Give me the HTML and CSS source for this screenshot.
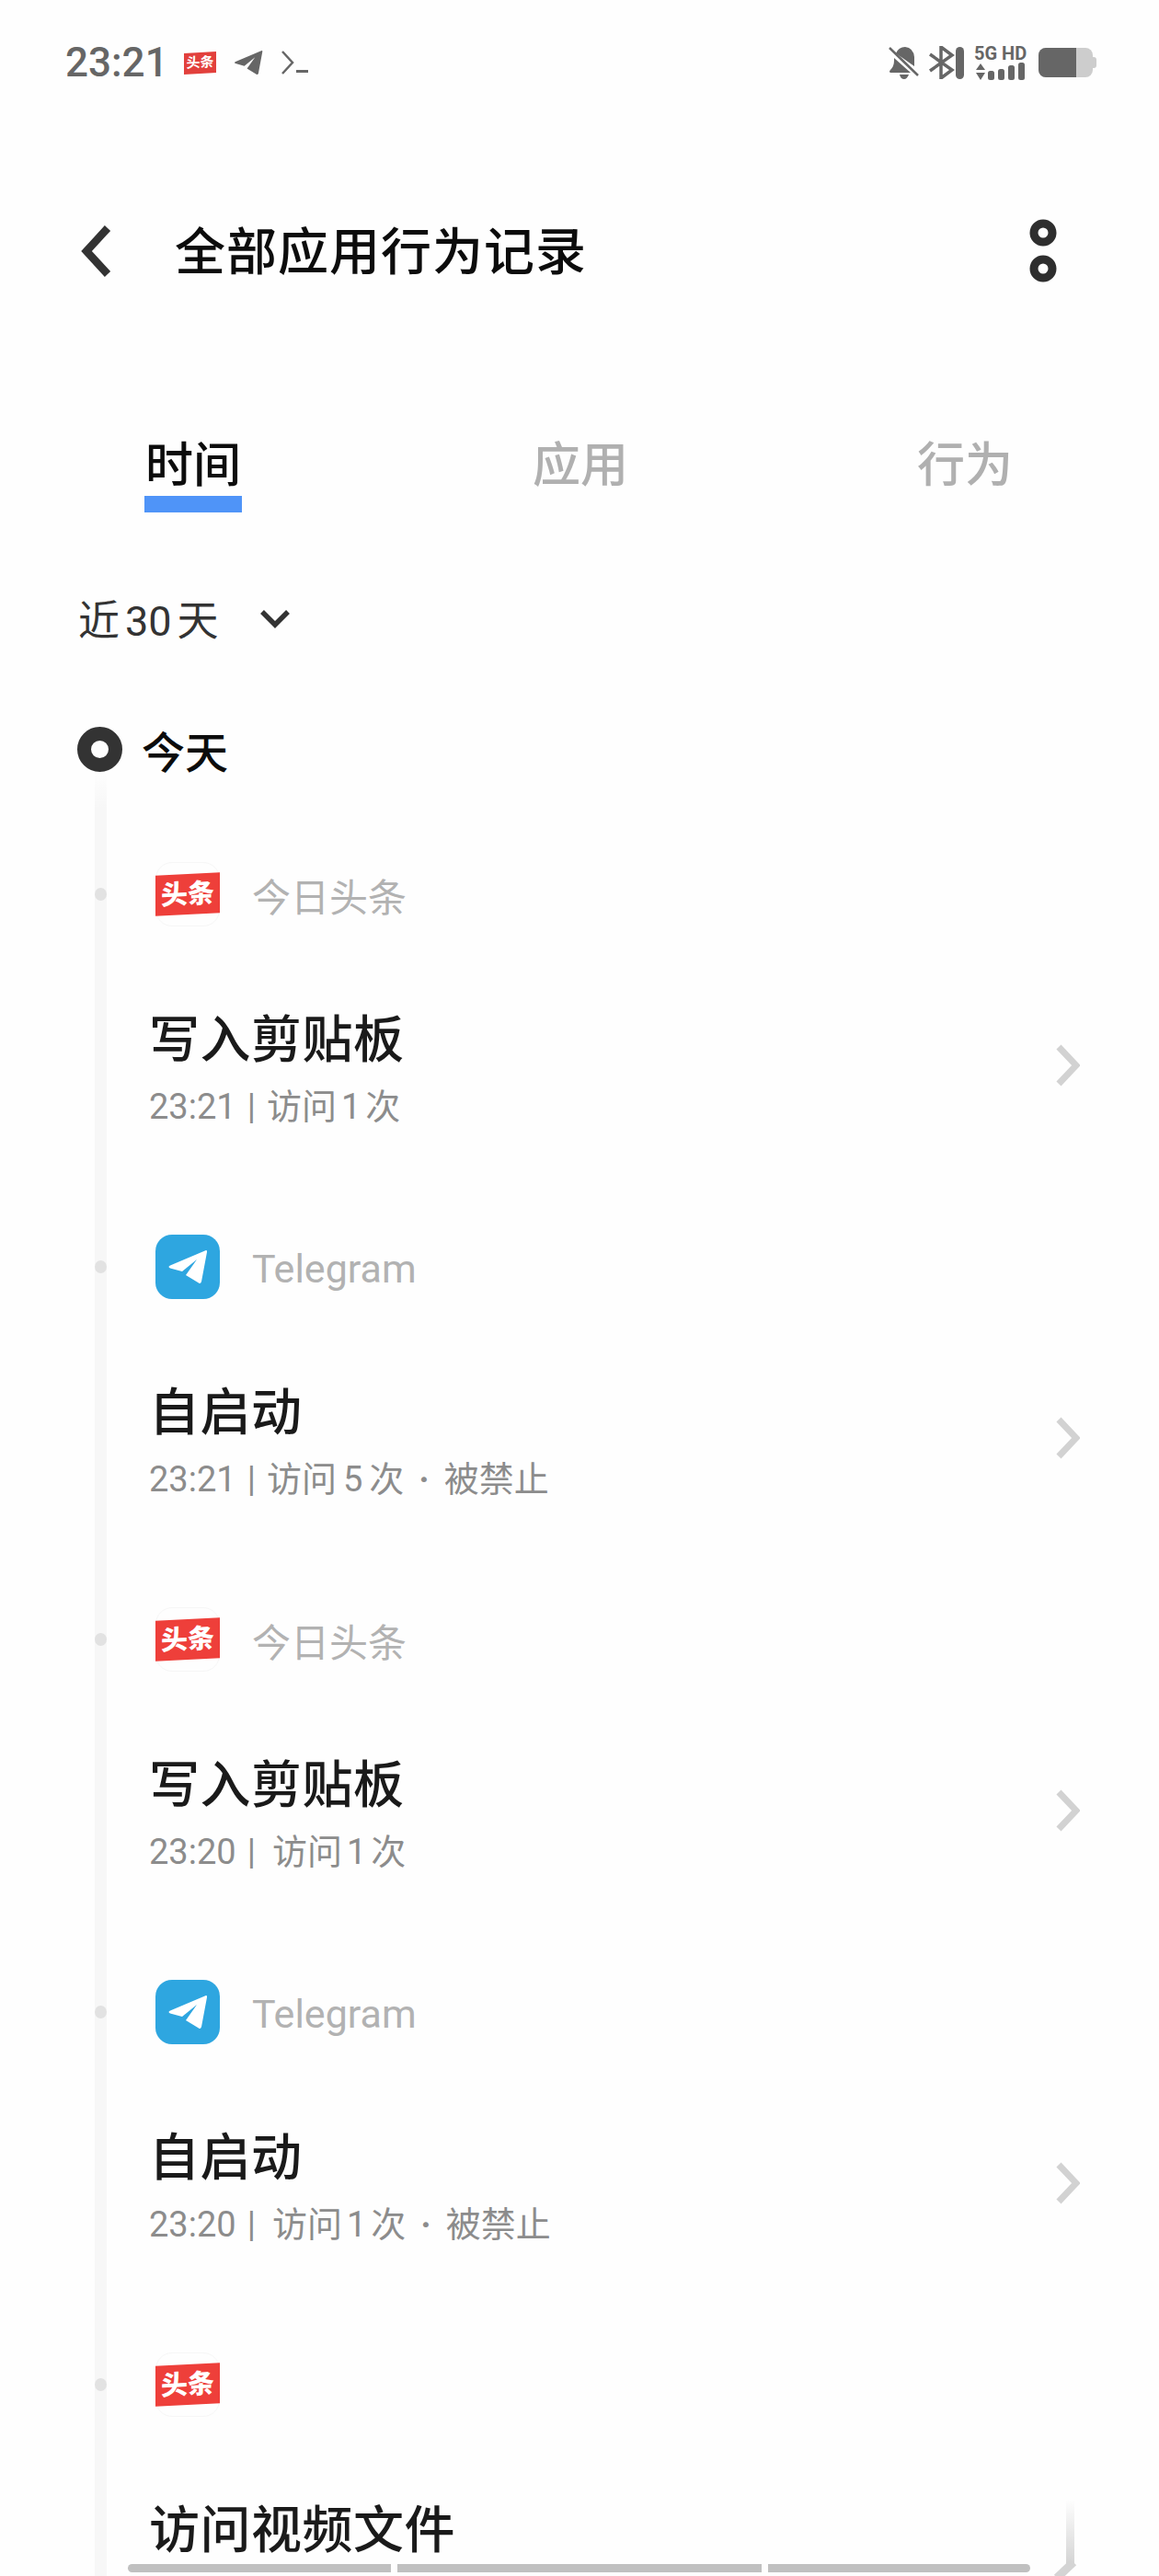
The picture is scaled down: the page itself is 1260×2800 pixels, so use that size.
FILE: index.html
```html
<!DOCTYPE html>
<html lang="zh-CN">
<head>
    <meta charset="UTF-8">
    <meta name="viewport" content="width=device-width, initial-scale=1.0">
    <title>全部应用行为记录</title>
    <link rel="stylesheet" href="styles.css">
</head>
<body>
    <svg class="defs" width="0" height="0">
        <symbol id="plane" viewBox="11 17 44 38">
            <path d="M53 18 Q54.500 18 54 20 L48 52 Q47 55 45 53.500 L31 45 L43 28 L27 41 L14 37.500 Q11 36 14 34.500 Z"/>
        </symbol>
        <symbol id="chevron" viewBox="0 0 26 46">
            <path d="M3 3 L22 23 L3 43" fill="none" stroke="currentColor" stroke-width="7"/>
        </symbol>
    </svg>

    <div class="statusbar">
        <span class="clock">23:21</span>
        <span class="badge">头条</span>
        <svg class="status-plane" width="32" height="28"><use href="#plane"/></svg>
        <svg class="status-term" width="30" height="26" viewBox="0 0 30 26">
            <path d="M1 1 L12 13 L1 25" fill="none" stroke="#666" stroke-width="2.500"/>
            <rect x="16" y="21" width="13" height="3" fill="#666"/>
        </svg>
        <div class="status-right">
            <svg width="34" height="36" viewBox="0 0 34 36">
                <path d="M8 8 Q11 1 18 1 Q27 2 28 12 L28 22 L8 8 Z M6 13 L24 29 L2 29 Q0 28 2 26 Q6 22 6 16 Z M12 31 L22 31 Q20 36 17 36 Q13 36 12 31 Z" fill="#666"/>
                <path d="M1 2 L32 32" stroke="#666" stroke-width="2.500"/>
            </svg>
            <svg class="bt" width="38" height="36" viewBox="0 0 38 36">
                <path d="M1 9 L25 26 L13 35 L13 1 L25 10 L1 27" fill="none" stroke="#666" stroke-width="3.500"/>
                <rect x="29" y="1" width="9" height="35" rx="4.500" fill="#666"/>
            </svg>
            <div class="net">
                <span class="net-label">5G HD</span>
                <svg width="58" height="20" viewBox="0 0 58 20">
                    <path d="M2 8 L7 1 L12 8 Z M2 11 L12 11 L7 19 Z" fill="#666"/>
                    <rect x="15" y="9" width="7" height="10" rx="2.500" fill="#666"/>
                    <rect x="26" y="7" width="7" height="12" rx="2.500" fill="#666"/>
                    <rect x="37" y="3" width="7" height="16" rx="2.500" fill="#666"/>
                    <rect x="48" y="0" width="7" height="19" rx="2.500" fill="#666"/>
                </svg>
            </div>
            <div class="battery"><div class="battery-fill"></div></div>
            <div class="battery-cap"></div>
        </div>
    </div>

    <header class="topbar">
        <svg class="back" width="34" height="56" viewBox="0 0 34 56">
            <path d="M30 3 L7 28 L30 53" fill="none" stroke="#333" stroke-width="8.500"/>
        </svg>
        <h1>全部应用行为记录</h1>
        <svg class="more" width="30" height="70" viewBox="0 0 30 70">
            <circle cx="15" cy="15" r="10" fill="none" stroke="#2e2e2e" stroke-width="9"/>
            <circle cx="15" cy="54" r="10" fill="none" stroke="#2e2e2e" stroke-width="9"/>
        </svg>
    </header>

    <nav class="tabs">
        <div class="tab active">时间</div>
        <div class="tab">应用</div>
        <div class="tab">行为</div>
    </nav>

    <div class="filter">
        <span>近<span class="num">30</span>天</span>
        <svg width="34" height="22" viewBox="0 0 34 22">
            <path d="M3 3 L17 17 L31 3" fill="none" stroke="#333" stroke-width="5.500"/>
        </svg>
    </div>

    <div class="today">
        <span class="ring"></span>
        <span>今天</span>
    </div>

    <main class="timeline">
        <section class="item">
            <div class="item-head">
                <span class="dot"></span>
                <div class="logo"><span class="logo-band">头条</span></div>
                <span class="app-name">今日头条</span>
            </div>
            <div class="item-body">
                <div>
                    <div class="item-title">写入剪贴板</div>
                    <div class="item-sub">23:21<span class="bar-sep">|</span>访问<span class="num one">1</span>次</div>
                </div>
                <svg class="arrow" width="26" height="46"><use href="#chevron"/></svg>
            </div>
        </section>

        <section class="item">
            <div class="item-head">
                <span class="dot"></span>
                <div class="logo logo-tg"><svg width="44" height="38"><use href="#plane"/></svg></div>
                <span class="app-name">Telegram</span>
            </div>
            <div class="item-body">
                <div>
                    <div class="item-title">自启动</div>
                    <div class="item-sub">23:21<span class="bar-sep">|</span>访问<span class="num">5</span>次<span class="sep">·</span>被禁止</div>
                </div>
                <svg class="arrow" width="26" height="46"><use href="#chevron"/></svg>
            </div>
        </section>

        <section class="item">
            <div class="item-head">
                <span class="dot"></span>
                <div class="logo"><span class="logo-band">头条</span></div>
                <span class="app-name">今日头条</span>
            </div>
            <div class="item-body">
                <div>
                    <div class="item-title">写入剪贴板</div>
                    <div class="item-sub">23:20<span class="bar-sep wide">|</span>访问<span class="num one">1</span>次</div>
                </div>
                <svg class="arrow" width="26" height="46"><use href="#chevron"/></svg>
            </div>
        </section>

        <section class="item">
            <div class="item-head">
                <span class="dot"></span>
                <div class="logo logo-tg"><svg width="44" height="38"><use href="#plane"/></svg></div>
                <span class="app-name">Telegram</span>
            </div>
            <div class="item-body">
                <div>
                    <div class="item-title">自启动</div>
                    <div class="item-sub">23:20<span class="bar-sep wide">|</span>访问<span class="num one">1</span>次<span class="sep">·</span>被禁止</div>
                </div>
                <svg class="arrow" width="26" height="46"><use href="#chevron"/></svg>
            </div>
        </section>

        <section class="item">
            <div class="item-head">
                <span class="dot"></span>
                <div class="logo"><span class="logo-band">头条</span></div>
            </div>
            <div class="item-body">
                <div class="item-title">访问视频文件</div>
            </div>
        </section>
    </main>

    <!-- scrollbar strip over the bottom edge -->
    <div class="bottom-bars">
        <div class="bar bar-a"></div>
        <div class="bar bar-b"></div>
        <div class="bar bar-c"></div>
    </div>
    <svg class="glitch" width="30" height="90" viewBox="0 0 30 90">
        <defs>
            <linearGradient id="fade" x1="0" y1="0" x2="0" y2="1">
                <stop offset="0" stop-color="#d4d4d4" stop-opacity="0"/>
                <stop offset="1" stop-color="#d4d4d4"/>
            </linearGradient>
        </defs>
        <rect x="17" y="0" width="9" height="70" fill="url(#fade)"/>
        <path d="M25 68 L7 85" stroke="#d4d4d4" stroke-width="9" fill="none"/>
    </svg>
</body>
</html>
```
FILE: styles.css
```css
/* General Styles */
body {
    position: relative;
    width: 1260px;
    height: 2800px;
    margin: 0;
    overflow: hidden;
    background-color: #fefefe;
    font-family: Roboto, "Noto Sans CJK SC", sans-serif;
}

.defs {
    display: block;
    height: 0;
}

.num {
    margin: 0 7px;
}

.num.one {
    margin: 0 5px;
}

/* Status Bar */
.statusbar {
    display: flex;
    align-items: center;
    height: 76px;
    padding: 30px 68px 0 71px;
    color: #666;
}

.clock {
    font-size: 44px;
    font-weight: 500;
}

.badge {
    margin-left: 17px;
    width: 35px;
    height: 23px;
    background-color: #e2403c;
    color: #fff;
    font-size: 15px;
    font-weight: 700;
    line-height: 23px;
    text-align: center;
    transform: skewY(-3deg);
}

.status-plane {
    margin-left: 19px;
    fill: #666;
}

.status-term {
    margin-left: 20px;
}

.status-right {
    display: flex;
    align-items: center;
    margin-left: auto;
}

.bt {
    margin-left: 10px;
}

.net {
    display: flex;
    flex-direction: column;
    margin-left: 11px;
}

.net-label {
    font-size: 20px;
    font-weight: 700;
    line-height: 20px;
    white-space: nowrap;
}

.battery {
    width: 59px;
    height: 32px;
    margin-left: 12px;
    background-color: #cdcdcd;
    border-radius: 8px;
    overflow: hidden;
}

.battery-fill {
    width: 41px;
    height: 100%;
    background-color: #666;
}

.battery-cap {
    width: 4px;
    height: 12px;
    background-color: #cdcdcd;
    border-radius: 0 3px 3px 0;
}

/* Header */
.topbar {
    display: flex;
    align-items: center;
    height: 80px;
    margin-top: 127px;
    padding-left: 87px;
}

.topbar h1 {
    margin: -8px 0 0 69px;
    color: #0c0c0c;
    font-size: 55px;
    font-weight: 500;
    letter-spacing: 1px;
}

.more {
    margin-left: auto;
    margin-right: 111px;
}

/* Tabs */
.tabs {
    display: flex;
    gap: 312px;
    margin-top: 158px;
    padding-left: 157px;
}

.tab {
    width: 98px;
    padding: 4px 4px 0;
    border-bottom: 18px solid transparent;
    color: #b0b0b0;
    font-size: 52px;
    font-weight: 500;
    line-height: 64px;
    text-align: center;
    white-space: nowrap;
}

.tab.active {
    border-bottom-color: #4f94f8;
    color: #0c0c0c;
    text-indent: -3px;
}

/* Filter */
.filter {
    display: flex;
    align-items: center;
    gap: 44px;
    height: 60px;
    margin-top: 84px;
    padding-left: 85px;
    color: #333;
    font-size: 45px;
}

.filter .num {
    margin: 0 6px;
}

.filter svg {
    margin-top: 4px;
}

/* Today */
.today {
    display: flex;
    align-items: center;
    gap: 21px;
    height: 50px;
    margin-top: 88px;
    padding-left: 84px;
    color: #0c0c0c;
    font-size: 47px;
    font-weight: 500;
}

.ring {
    box-sizing: border-box;
    width: 49px;
    height: 49px;
    border: 15px solid #333;
    border-radius: 50%;
}

/* Timeline */
.timeline {
    height: 1900px;
    margin-left: 103px;
    padding: 98px 86px 0 0;
    border-left: 13px solid #f6f6f6;
    border-image: linear-gradient(#fefefe, #f7f7f7 40px) 1;
}

.item {
    margin-bottom: 114px;
}

.item-head {
    display: flex;
    align-items: center;
    height: 70px;
}

.dot {
    width: 13px;
    height: 14px;
    margin-left: -13px;
    background-color: #e2e2e2;
    border-radius: 50%;
}

.logo {
    display: flex;
    align-items: center;
    justify-content: center;
    box-sizing: border-box;
    width: 70px;
    height: 70px;
    margin-left: 53px;
    border: 1px solid #f6f6f6;
    border-radius: 18px;
}

.logo-band {
    width: 70px;
    height: 44px;
    flex-shrink: 0;
    background-color: #ee3f3a;
    color: #fff;
    font-size: 29px;
    font-weight: 900;
    line-height: 44px;
    text-align: center;
    transform: skewY(-3deg);
}

.logo-tg {
    background-color: #2ea6e0;
    border: none;
    fill: #fff;
}

.app-name {
    margin-left: 35px;
    color: #b2b2b2;
    font-size: 42px;
}

.logo-tg + .app-name {
    margin-top: 4px;
    font-size: 43px;
}

.item-body {
    display: flex;
    align-items: center;
    justify-content: space-between;
    margin-top: 91px;
    padding-left: 46px;
}

.item-title {
    color: #1a1a1a;
    font-size: 55px;
    font-weight: 500;
    letter-spacing: 0.500px;
    line-height: 64px;
}

.item-sub {
    margin-top: 16px;
    color: #8c8c8c;
    font-size: 38px;
    line-height: 50px;
    white-space: nowrap;
}

.bar-sep {
    margin: 0 12px;
}

.bar-sep.wide {
    margin-right: 18px;
}

.sep {
    margin: 0 16px;
    font-weight: 700;
}

.arrow {
    margin-bottom: 10px;
    color: #d2d2d2;
}

/* Bottom overlay */
.bottom-bars {
    position: absolute;
    left: 139px;
    top: 2787px;
    display: flex;
    gap: 7px;
}

.bar {
    height: 9px;
    background-color: #c0c0c0;
}

.bar-a {
    width: 286px;
    border-radius: 5px 0 0 5px;
}

.bar-b {
    width: 396px;
}

.bar-c {
    width: 285px;
    border-radius: 0 5px 5px 0;
}

.glitch {
    position: absolute;
    left: 1142px;
    top: 2717px;
}
```
